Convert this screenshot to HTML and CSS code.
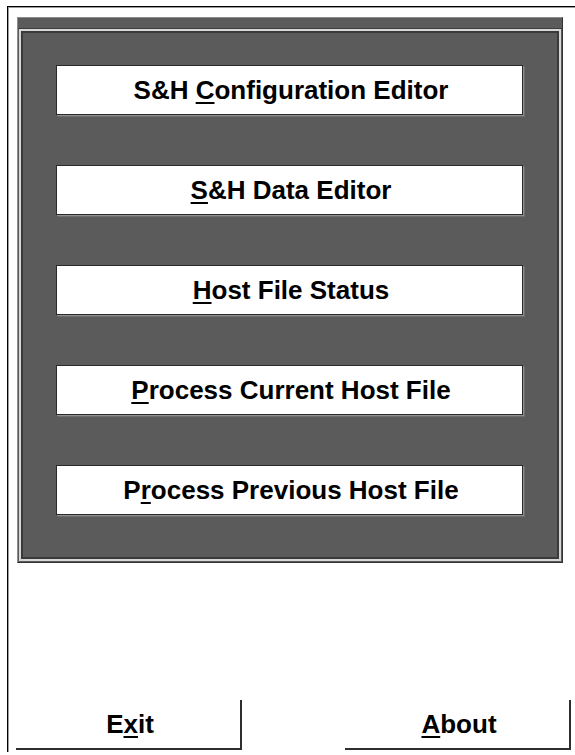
FILE: index.html
```html
<!DOCTYPE html>
<html lang="en">
<head>
<meta charset="utf-8">
<title>S&amp;H Host Menu</title>
<link rel="stylesheet" href="styles.css">
</head>
<body>
<div class="window">
  <div class="panel">
    <div class="panel-bar"></div>
    <div class="panel-well">
      <div class="menu">
        <button class="menu-btn"><span>S&amp;H <u>C</u>onfiguration Editor</span></button>
        <button class="menu-btn"><span><u>S</u>&amp;H Data Editor</span></button>
        <button class="menu-btn"><span><u>H</u>ost File Status</span></button>
        <button class="menu-btn"><span><u>P</u>rocess Current Host File</span></button>
        <button class="menu-btn"><span>P<u>r</u>ocess Previous Host File</span></button>
      </div>
    </div>
  </div>
  <div class="actions">
    <button class="action-btn"><span>E<u>x</u>it</span></button>
    <button class="action-btn"><span><u>A</u>bout</span></button>
  </div>
</div>
</body>
</html>
```

FILE: styles.css
```css
html, body {
  margin: 0;
  padding: 0;
  background: #ffffff;
}

body {
  font-family: "Liberation Sans", Arial, sans-serif;
  overflow: hidden;
}

.window {
  margin: 6px 0 0 7px;
  height: 746px;
  box-sizing: border-box;
  border-top: 1px solid #000000;
  border-left: 1px solid #000000;
  box-shadow: inset 1px 1px 0 #9c9c9c;
  padding: 10px 0 2px 9px;
  display: flex;
  flex-direction: column;
}

/* dark grouped panel with a bevelled well */
.panel {
  width: 546px;
  height: 546px;
  box-sizing: border-box;
  background: #5b5b5b;
  border: 1px solid #8c8c8c;
  border-right-color: #333333;
  border-bottom-color: #333333;
  display: flex;
  flex-direction: column;
}

.panel-bar {
  height: 10px;
  border-bottom: 1px solid #3e3e3e;
}

.panel-well {
  flex: 1;
  margin: 0 1px 1px 1px;
  border: 2px solid #d6d6d6;
  box-shadow: inset 2px 2px 0 #3a3a3a, inset -2px -2px 0 #3a3a3a;
  background: #5b5b5b;
}

.menu {
  display: flex;
  flex-direction: column;
  gap: 50px;
  padding: 34px 0 0 35px;
}

.menu-btn {
  width: 467px;
  height: 50px;
  box-sizing: border-box;
  background: #ffffff;
  border: 1px solid #2a2a2a;
  box-shadow: 1px 1px 0 #8e8e8e, 2px 2px 0 #6e6e6e;
  font: bold 26px "Liberation Sans", Arial, sans-serif;
  color: #000000;
  padding: 0 0 0 3px;
  margin: 0;
  display: flex;
  align-items: center;
  justify-content: center;
  cursor: pointer;
}

.menu-btn span,
.action-btn span {
  white-space: pre;
}

u {
  text-decoration-thickness: 2px;
  text-underline-offset: 3px;
}

.actions {
  margin-top: auto;
  margin-left: -1px;
  width: 555px;
  display: flex;
  justify-content: space-between;
}

.action-btn {
  width: 226px;
  height: 50px;
  box-sizing: border-box;
  background: #ffffff;
  border: none;
  border-right: 2px solid #2e2e2e;
  border-bottom: 2px solid #2e2e2e;
  font: bold 26px "Liberation Sans", Arial, sans-serif;
  color: #000000;
  padding: 0 0 0 4px;
  margin: 0;
  display: flex;
  align-items: center;
  justify-content: center;
  cursor: pointer;
}
```
